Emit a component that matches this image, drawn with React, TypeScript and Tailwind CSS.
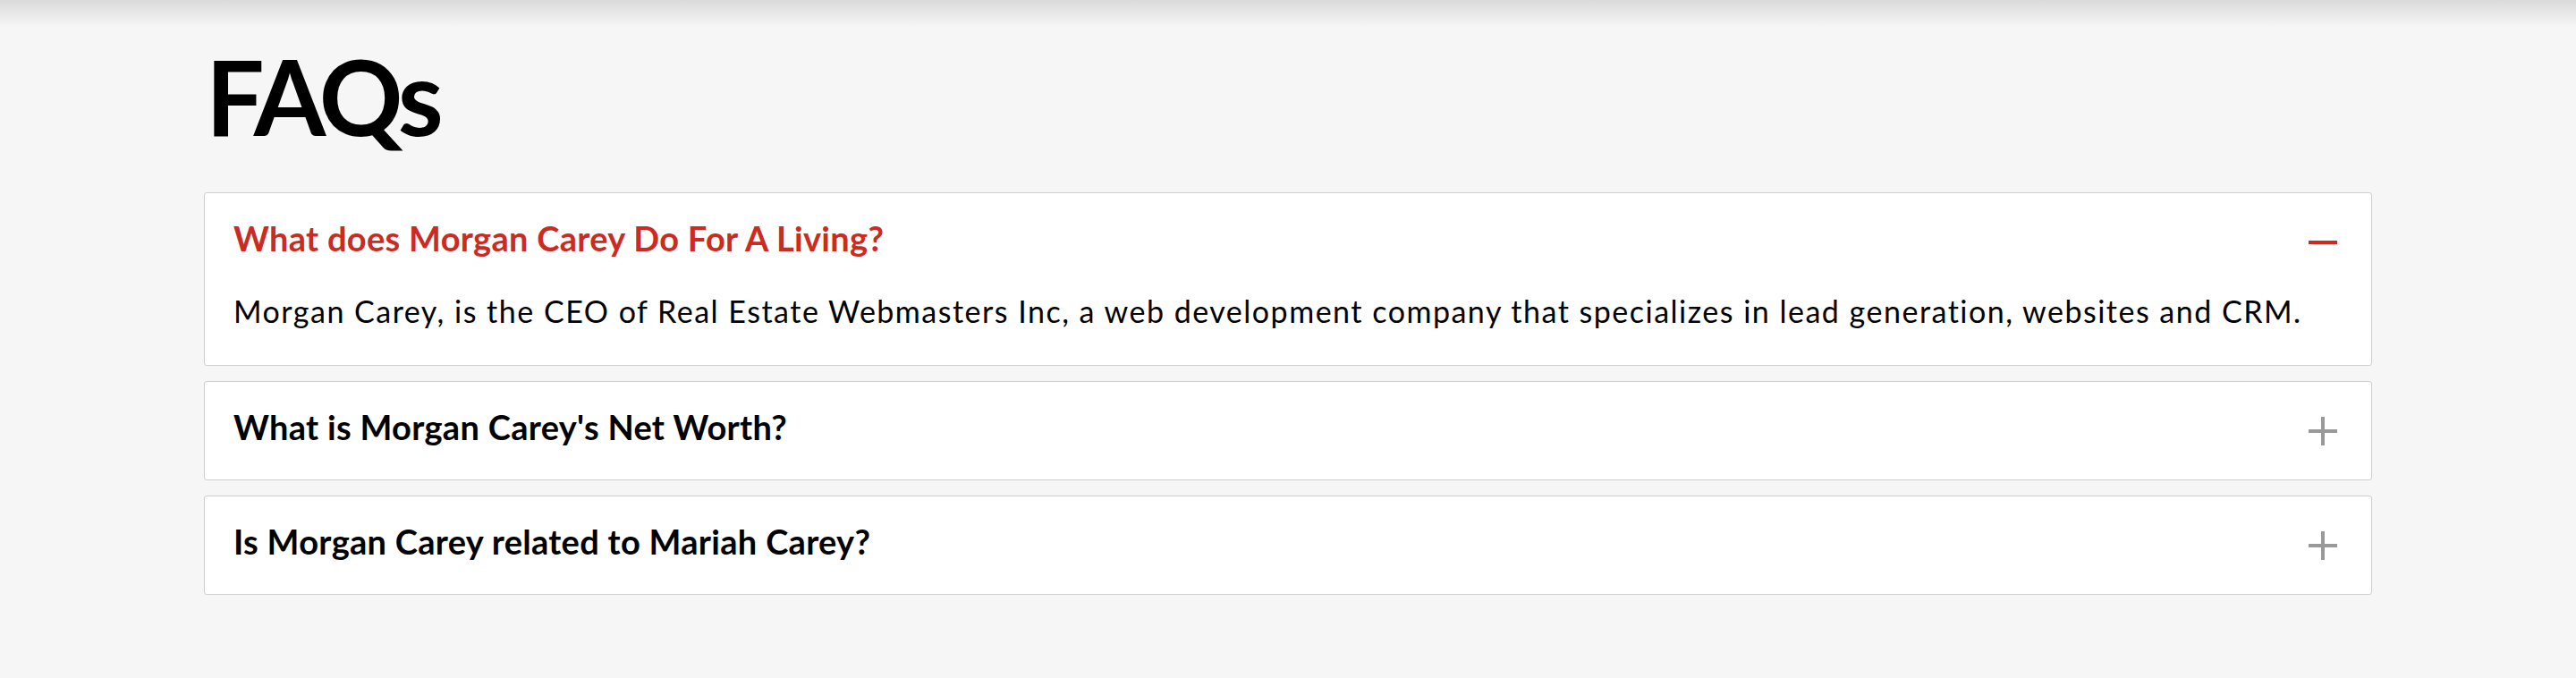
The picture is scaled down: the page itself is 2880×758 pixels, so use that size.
import React from "react";

const font = { fontFamily: "Lato, 'Noto Sans', 'Liberation Sans', sans-serif" };

function Minus() {
  return (
    <svg width="32" height="32" viewBox="0 0 32 32" className="shrink-0">
      <rect x="0" y="14" width="32" height="4" fill="#cc2b22" />
    </svg>
  );
}

function Plus() {
  return (
    <svg width="32" height="32" viewBox="0 0 32 32" className="shrink-0">
      <rect x="0" y="14" width="32" height="4" fill="#999999" />
      <rect x="14" y="0" width="4" height="32" fill="#999999" />
    </svg>
  );
}

type Item = { q: string; a?: string; open?: boolean };

const items: Item[] = [
  {
    q: "What does Morgan Carey Do For A Living?",
    a: "Morgan Carey, is the CEO of Real Estate Webmasters Inc, a web development company that specializes in lead generation, websites and CRM.",
    open: true,
  },
  { q: "What is Morgan Carey's Net Worth?" },
  { q: "Is Morgan Carey related to Mariah Carey?" },
];

export default function App() {
  return (
    <div className="min-h-[758px] bg-[#f6f6f6]" style={font}>
      <div className="h-[30px] bg-gradient-to-b from-[#dadada] to-[#f6f6f6]" />
      <div className="mx-auto w-[2424px] pt-[20px] pb-[60px]">
        <h1 className="text-[116px] leading-[116px] font-bold text-black pl-[2px] tracking-[-5px]">
          FAQs
        </h1>
        <div className="mt-[49px] flex flex-col gap-[17px]">
          {items.map((it, i) => (
            <div
              key={i}
              className="bg-white border border-[#cfcfcf] rounded-[3px] px-[32px]"
            >
              <div className="flex items-center justify-between h-[109px]">
                <span
                  className={`text-[38px] leading-[45px] font-bold mb-[9px] tracking-[0.3px] ${
                    it.open ? "text-[#cc2b22]" : "text-black"
                  }`}
                >
                  {it.q}
                </span>
                <div className="mr-[6px]">{it.open ? <Minus /> : <Plus />}</div>
              </div>
              {it.open && it.a && (
                <div className="-mt-[3px] pb-[35px] text-[34px] leading-[51px] text-black tracking-[1.5px]">
                  {it.a}
                </div>
              )}
            </div>
          ))}
        </div>
      </div>
    </div>
  );
}
